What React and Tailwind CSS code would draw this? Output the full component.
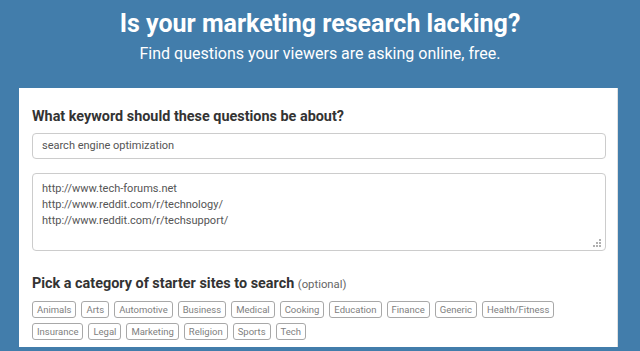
import React from "react";

const row1 = ["Animals", "Arts", "Automotive", "Business", "Medical", "Cooking", "Education", "Finance", "Generic", "Health/Fitness"];
const row2 = ["Insurance", "Legal", "Marketing", "Religion", "Sports", "Tech"];

function Tag({ label }) {
  return (
    <span className="inline-flex h-[17px] items-center rounded-[3px] border border-[#a8a8a8] px-[4px] text-[9.5px] leading-none text-[#808080]">
      {label}
    </span>
  );
}

export default function App() {
  return (
    <div className="h-[351px] w-[640px] overflow-hidden bg-[#427dab] font-['Roboto',sans-serif]">
      <div className="pt-[9px] text-center text-white">
        <h1 className="text-[25px] font-bold leading-[30px]">Is your marketing research lacking?</h1>
        <p className="mt-[5px] text-[16px] leading-[20px]">Find questions your viewers are asking online, free.</p>
      </div>
      <div className="ml-[19px] mt-[24px] w-[599px] border-r border-[#e0e0e0] bg-white pb-[7px] pl-[13px] pr-[11px] pt-[19px]">
        <h2 className="text-[14.4px] font-bold leading-[20px] text-[#333]">What keyword should these questions be about?</h2>
        <div className="mt-[6px] flex h-[26px] items-center rounded-[4px] border border-[#ccc] px-[9px] pt-[1px] text-[11px] text-[#555]">
          search engine optimization
        </div>
        <div className="relative mt-[14px] h-[78px] rounded-[4px] border border-[#ccc] px-[9px] py-[7px] text-[11px] leading-[16px] text-[#555]">
          <div>http://www.tech-forums.net</div>
          <div>http://www.reddit.com/r/technology/</div>
          <div>http://www.reddit.com/r/techsupport/</div>
          <svg className="absolute bottom-[2px] right-[3px]" width="9" height="9" viewBox="0 0 9 9">
            <rect x="6" y="0" width="2" height="2" fill="#b0b0b0" />
            <rect x="3" y="3" width="2" height="2" fill="#b0b0b0" />
            <rect x="6" y="3" width="2" height="2" fill="#b0b0b0" />
            <rect x="0" y="6" width="2" height="2" fill="#b0b0b0" />
            <rect x="3" y="6" width="2" height="2" fill="#b0b0b0" />
            <rect x="6" y="6" width="2" height="2" fill="#b0b0b0" />
          </svg>
        </div>
        <h2 className="mt-[23px] text-[14.4px] font-bold leading-[20px] text-[#333]">
          Pick a category of starter sites to search{" "}
          <span className="text-[11.3px] font-normal text-[#666]">(optional)</span>
        </h2>
        <div className="mt-[6px] flex flex-wrap gap-x-[5px] gap-y-[5px]">
          {row1.map((t) => (
            <Tag key={t} label={t} />
          ))}
        </div>
        <div className="mt-[5px] flex flex-wrap gap-x-[5px]">
          {row2.map((t) => (
            <Tag key={t} label={t} />
          ))}
        </div>
      </div>
    </div>
  );
}
